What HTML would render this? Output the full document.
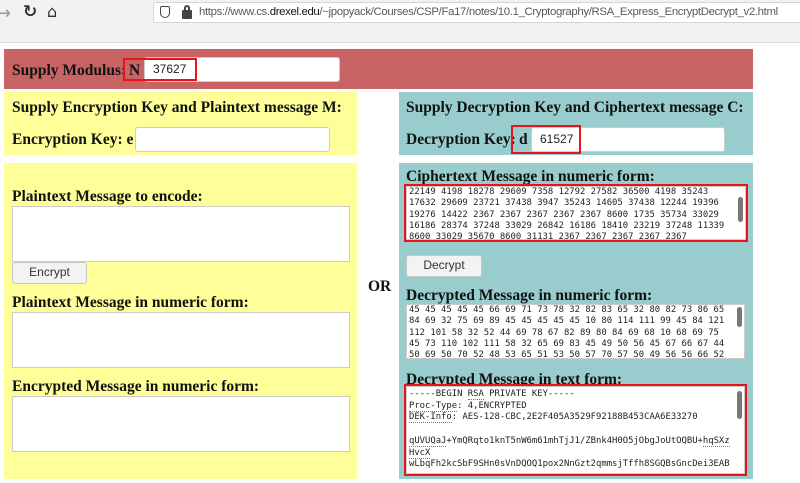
<!DOCTYPE html>
<html><head><meta charset="utf-8"><style>
*{box-sizing:border-box;margin:0;padding:0}
body{width:800px;height:483px;overflow:hidden;background:#fff;position:relative;font-family:"Liberation Serif",serif}
.a{position:absolute}
.tb{left:0;top:0;width:800px;height:43px;background:#f2f2f2;border-bottom:1px solid #ddd}
.url{left:153px;top:2px;width:660px;height:21px;background:#fff;border:1px solid #d4d4d4;border-radius:3px;font:11.4px "Liberation Sans",sans-serif;color:#5a5a5a;line-height:19px;padding-left:45px;white-space:nowrap;overflow:hidden;letter-spacing:-0.35px}
.url b{font-weight:normal;color:#111}
.h{font-weight:bold;font-size:15.5px;color:#111;white-space:nowrap}
.in{background:#fff;border:1px solid #ccc;border-radius:3px;font:12px "Liberation Sans",sans-serif;line-height:22px;padding-left:8px;color:#222}
.ta{background:#fff;border:1px solid #ccc;font:8.9px "DejaVu Sans Mono",monospace;line-height:11.3px;color:#222;white-space:pre;overflow:hidden;padding:0 2px}
.btn{background:#f3f3f3;border:1px solid #c8c8c8;border-radius:3px;font:12px "Liberation Sans",sans-serif;color:#333;text-align:center;line-height:19px}
.rb{border:2px solid #e8141a}
.sb{position:absolute;right:2px;top:8px;width:5px;height:30px;background:#777;border-radius:3px}
.u{border-bottom:1px dotted #e44}
</style></head><body>
<div class="a tb"></div>
<div class="a" style="left:-4px;top:3px;font:18px 'DejaVu Sans';color:#999">→</div>
<div class="a" style="left:23px;top:2px;font:bold 17px 'DejaVu Sans';color:#333">↻</div>
<div class="a" style="left:47px;top:2px;font:16px 'DejaVu Sans';color:#333">⌂</div>
<div class="a url">https://www.cs.<b>drexel.edu</b>/~jpopyack/Courses/CSP/Fa17/notes/10.1_Cryptography/RSA_Express_EncryptDecrypt_v2.html</div>
<div class="a" style="left:160px;top:6px;width:10px;height:12px;border:1.5px solid #444;border-radius:2px 2px 5px 5px"></div>
<div class="a" style="left:182px;top:10px;width:10px;height:9px;background:#444;border-radius:1px"></div>
<div class="a" style="left:184px;top:5px;width:6px;height:7px;border:2px solid #444;border-bottom:none;border-radius:3px 3px 0 0"></div>

<div class="a" style="left:4px;top:49px;width:749px;height:40px;background:#c86464"></div>
<div class="a h" style="left:12px;top:62px">Supply Modulus:</div>
<div class="a h" style="left:129px;top:62px">N</div>
<div class="a in" style="left:144px;top:57px;width:196px;height:25px">37627</div>
<div class="a rb" style="left:123px;top:58px;width:74px;height:23px"></div>

<div class="a" style="left:4px;top:92px;width:353px;height:63px;background:#ffff99"></div>
<div class="a" style="left:4px;top:163px;width:353px;height:316px;background:#ffff99"></div>
<div class="a" style="left:399px;top:92px;width:354px;height:63px;background:#99cccc"></div>
<div class="a" style="left:399px;top:163px;width:354px;height:316px;background:#99cccc"></div>

<div class="a h" style="left:12px;top:99px">Supply Encryption Key and Plaintext message M:</div>
<div class="a h" style="left:12px;top:131px">Encryption Key: e</div>
<div class="a in" style="left:135px;top:127px;width:195px;height:25px"></div>
<div class="a h" style="left:12px;top:188px">Plaintext Message to encode:</div>
<div class="a ta" style="left:12px;top:206px;width:338px;height:56px"></div>
<div class="a btn" style="left:12px;top:262px;width:75px;height:22px">Encrypt</div>
<div class="a h" style="left:12px;top:294px">Plaintext Message in numeric form:</div>
<div class="a ta" style="left:12px;top:312px;width:338px;height:56px"></div>
<div class="a h" style="left:12px;top:378px">Encrypted Message in numeric form:</div>
<div class="a ta" style="left:12px;top:396px;width:338px;height:56px"></div>
<div class="a h" style="left:368px;top:278px">OR</div>

<div class="a h" style="left:406px;top:99px">Supply Decryption Key and Ciphertext message C:</div>
<div class="a h" style="left:406px;top:131px">Decryption Key:</div>
<div class="a h" style="left:519px;top:131px">d</div>
<div class="a in" style="left:531px;top:127px;width:194px;height:25px">61527</div>
<div class="a rb" style="left:511px;top:125px;width:70px;height:29px"></div>

<div class="a h" style="left:406px;top:168px">Ciphertext Message in numeric form:</div>
<div class="a ta" style="left:406px;top:186px;width:340px;height:54px">22149 4198 18278 29609 7358 12792 27582 36500 4198 35243
17632 29609 23721 37438 3947 35243 14605 37438 12244 19396
19276 14422 2367 2367 2367 2367 2367 8600 1735 35734 33029
16186 28374 37248 33029 26842 16186 18410 23219 37248 11339
8600 33029 35670 8600 31131 2367 2367 2367 2367 2367<div class="sb" style="top:10px;height:25px"></div></div>
<div class="a rb" style="left:404px;top:184px;width:344px;height:58px"></div>
<div class="a btn" style="left:406px;top:255px;width:76px;height:22px">Decrypt</div>
<div class="a h" style="left:406px;top:287px">Decrypted Message in numeric form:</div>
<div class="a ta" style="left:406px;top:304px;width:339px;height:55px">45 45 45 45 45 66 69 71 73 78 32 82 83 65 32 80 82 73 86 65
84 69 32 75 69 89 45 45 45 45 45 10 80 114 111 99 45 84 121
112 101 58 32 52 44 69 78 67 82 89 80 84 69 68 10 68 69 75
45 73 110 102 111 58 32 65 69 83 45 49 50 56 45 67 66 67 44
50 69 50 70 52 48 53 65 51 53 50 57 70 57 50 49 56 56 66 52<div class="sb" style="top:2px;height:20px"></div></div>
<div class="a h" style="left:406px;top:371px">Decrypted Message in text form:</div>
<div class="a ta" style="left:406px;top:386px;width:339px;height:88px;padding-top:2px;line-height:11.7px">-----BEGIN <span class="u">RSA</span> PRIVATE KEY-----
<span class="u">Proc-Type</span>: 4,ENCRYPTED
<span class="u">DEK-Info</span>: AES-128-CBC,2E2F405A3529F92188B453CAA6E33270

<span class="u">qUVUQaJ</span>+YmQRqto1knT5nW6m61mhTjJ1/ZBnk4H0O5jObgJoUtOQBU+<span class="u">hqSXz</span>
<span class="u">HvcX</span>
wLbqFh2kcSbF9SHn0sVnDQOQ1pox2NnGzt2qmmsjTffh8SGQBsGncDei3EAB<div class="sb" style="top:4px;height:28px"></div></div>
<div class="a rb" style="left:404px;top:384px;width:343px;height:92px"></div>
</body></html>
